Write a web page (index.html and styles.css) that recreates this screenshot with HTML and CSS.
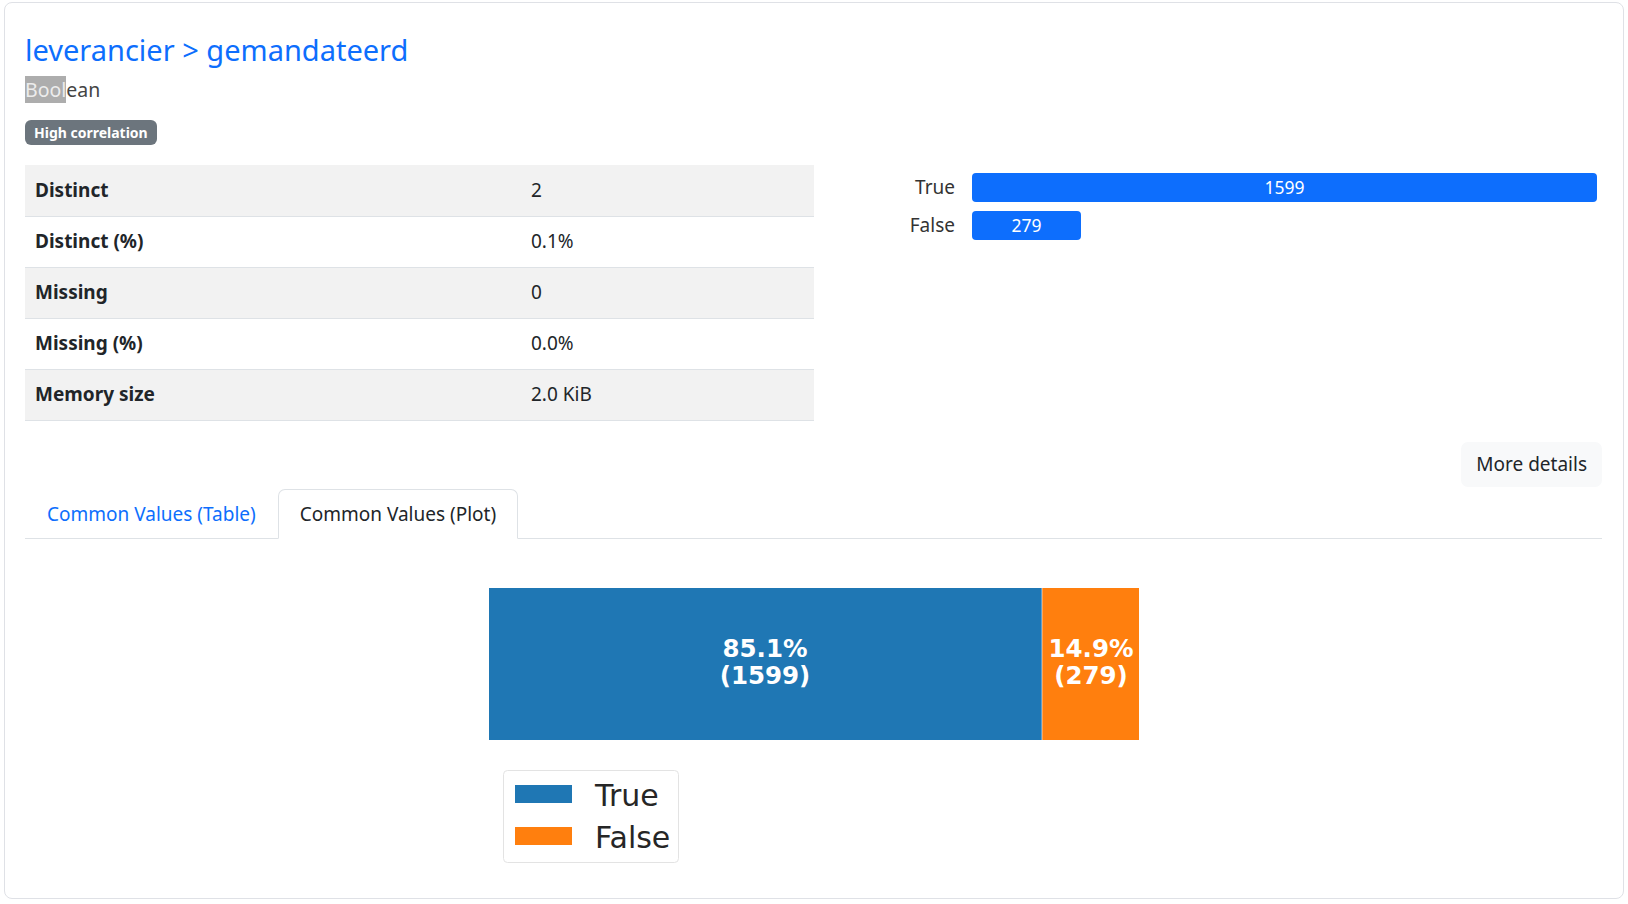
FILE: index.html
```html
<!DOCTYPE html>
<html lang="nl">
<head>
<meta charset="utf-8">
<title>leverancier &gt; gemandateerd</title>
<link rel="stylesheet" href="styles.css">
</head>
<body>
<div class="card">
  <h1 class="title"><a href="#">leverancier &gt; gemandateerd</a></h1>
  <div class="vtype"><span class="sel">Bool</span>ean</div>
  <div class="badges"><span class="badge">High correlation</span></div>

  <div class="overview">
    <table class="stats">
      <tbody>
        <tr><th>Distinct</th><td>2</td></tr>
        <tr><th>Distinct (%)</th><td>0.1%</td></tr>
        <tr><th>Missing</th><td>0</td></tr>
        <tr><th>Missing (%)</th><td>0.0%</td></tr>
        <tr><th>Memory size</th><td>2.0 KiB</td></tr>
      </tbody>
    </table>
    <div class="mini">
      <div class="mini-label">True</div>
      <div class="mini-cell"><div class="mini-bar" style="width:100%">1599</div></div>
      <div class="mini-label">False</div>
      <div class="mini-cell"><div class="mini-bar" style="width:17.45%">279</div></div>
    </div>
  </div>

  <div class="actions"><button class="btn">More details</button></div>

  <ul class="tabs">
    <li class="tab"><a href="#">Common Values (Table)</a></li>
    <li class="tab active"><a href="#">Common Values (Plot)</a></li>
  </ul>

  <div class="plot">
    <svg class="plot-svg" width="650" height="280" viewBox="0 0 650 280" xmlns="http://www.w3.org/2000/svg">
      <rect x="0" y="0" width="553" height="152" fill="#1f77b4"/>
      <rect x="553" y="0" width="97" height="152" fill="#ff7f0e"/>
      <line x1="553" y1="0" x2="553" y2="152" stroke="#ffffff" stroke-width="1" opacity="0.6"/>
      <g class="bar-text" text-anchor="middle">
        <text x="276" y="69">85.1%</text>
        <text x="276" y="96">(1599)</text>
        <text x="602" y="69">14.9%</text>
        <text x="602" y="96">(279)</text>
      </g>
      <rect x="14.5" y="182.5" width="175" height="92" rx="4" fill="#ffffff" stroke="#e3e3e3"/>
      <rect x="26" y="197" width="57" height="18" fill="#1f77b4"/>
      <rect x="26" y="239" width="57" height="18" fill="#ff7f0e"/>
      <g class="legend-text">
        <text x="106" y="218">True</text>
        <text x="106" y="260">False</text>
      </g>
    </svg>
  </div>
</div>
</body>
</html>
```

FILE: styles.css
```css
* { box-sizing: border-box; }

body {
  margin: 0;
  font-family: "Noto Sans", "Open Sans", sans-serif;
  font-size: 19px;
  line-height: 1.5;
  color: #212529;
  background: #ffffff;
}

.card {
  margin: 2px 4px 0 4px;
  width: 1620px;
  border: 1px solid #dfe1e6;
  border-radius: 8px;
  padding: 29px 21px 30px 20px;
}

.title {
  margin: 0;
  font-size: 29px;
  font-weight: 400;
  line-height: 35px;
}
.title a {
  color: #0d6efd;
  text-decoration: none;
}

.vtype {
  margin-top: 9px;
  height: 28px;
  line-height: 28px;
  color: #444444;
  font-size: 19.5px;
}
.sel {
  background: #adadad;
  color: #ececec;
}

.badges {
  margin-top: 13px;
  height: 25px;
}
.badge {
  display: inline-block;
  height: 25px;
  line-height: 25px;
  padding: 0 9px;
  background: #6c757d;
  color: #ffffff;
  font-size: 14px;
  font-weight: 700;
  border-radius: 6px;
}

.overview {
  margin-top: 23px;
  display: flex;
}

.stats {
  width: 789px;
  flex: 0 0 789px;
  border-collapse: collapse;
}
.stats tr {
  height: 51px;
  border-bottom: 1px solid #dee2e6;
}
.stats tr:nth-child(odd) { background: #f2f2f2; }
.stats th {
  text-align: left;
  font-weight: 700;
  padding: 0 10px;
  width: 496px;
}
.stats td {
  padding: 0 10px;
}

.mini {
  flex: 1;
  display: grid;
  grid-template-columns: 158px 1fr;
  grid-auto-rows: 38px;
  padding: 3px 5px 0 0;
  align-content: start;
}
.mini-label {
  text-align: right;
  padding-right: 17px;
  align-self: center;
  color: #333333;
}
.mini-cell {
  display: flex;
  align-items: center;
}
.mini-bar {
  height: 29px;
  line-height: 29px;
  background: #0d6efd;
  color: #ffffff;
  text-align: center;
  border-radius: 4px;
  font-size: 17.5px;
}

.actions {
  margin-top: 21px;
  display: flex;
  justify-content: flex-end;
}
.btn {
  height: 45px;
  padding: 0 15px;
  border: none;
  border-radius: 7px;
  background: #f8f9fa;
  color: #212529;
  font-family: inherit;
  font-size: 19px;
}

.tabs {
  list-style: none;
  margin: 2px 0 0 0;
  padding: 0;
  display: flex;
  border-bottom: 1px solid #dee2e6;
}
.tab {
  height: 50px;
  margin-bottom: -1px;
  border: 1px solid transparent;
  border-radius: 7px 7px 0 0;
}
.tab a {
  display: block;
  padding: 0 21px;
  line-height: 48px;
  color: #0d6efd;
  text-decoration: none;
}
.tab.active {
  border-color: #dee2e6 #dee2e6 #ffffff;
  background: #ffffff;
}
.tab.active a { color: #212529; }

.plot {
  margin-top: 49px;
  display: flex;
  justify-content: center;
}
.plot-svg { display: block; }

.bar-text text {
  font-family: "DejaVu Sans", sans-serif;
  font-weight: 700;
  font-size: 24.5px;
  fill: #ffffff;
}
.legend-text text {
  font-family: "DejaVu Sans", sans-serif;
  font-size: 30px;
  fill: #262626;
}
```
